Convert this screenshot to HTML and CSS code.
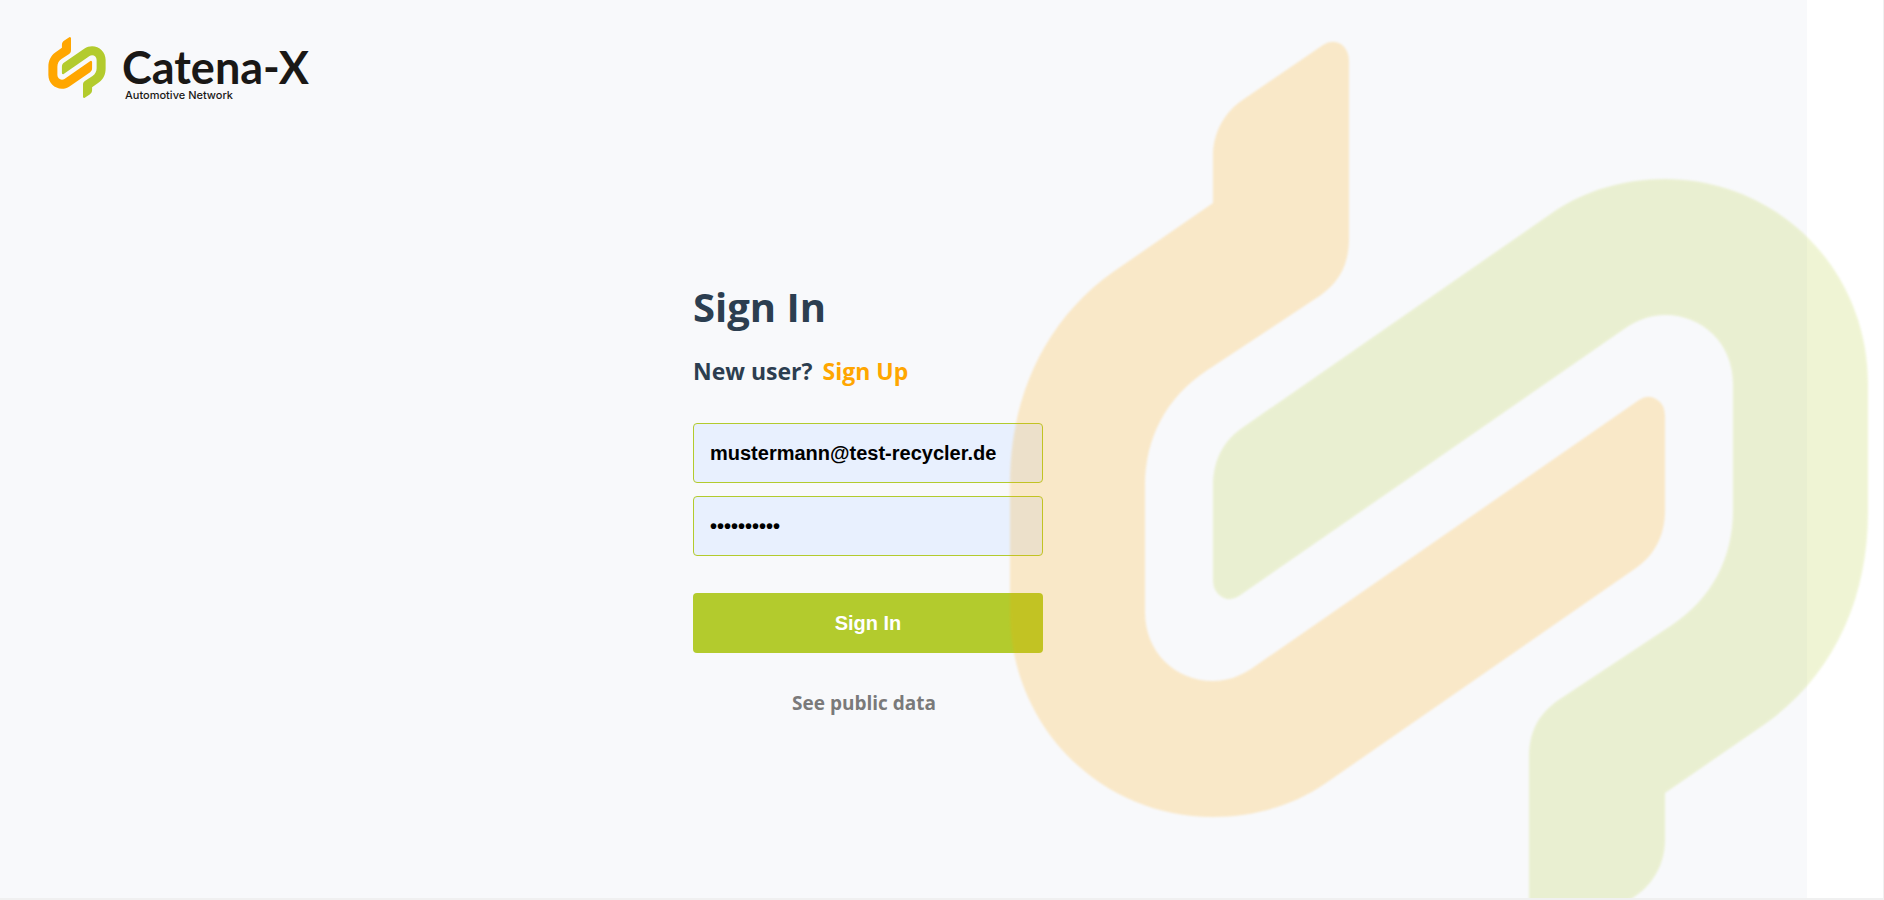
FILE: index.html
```html
<!DOCTYPE html>
<html lang="en">
<head>
<meta charset="utf-8">
<title>Catena-X - Sign In</title>
<link rel="stylesheet" href="styles.css">
</head>
<body>
<svg class="defs" aria-hidden="true">
  <defs>
    <path id="ribbon" d="M1323 45Q1332 39 1341 44Q1349 50 1349 61V238C1349 264 1340 281 1321 295L1206 371C1166 398 1145 438 1145 486V612C1145 652 1175 681 1213 681C1228 681 1240 676 1251 669L1639 400Q1648 394 1656 399Q1665 404 1665 416V510C1665 534 1656 554 1636 568L1326 783C1293 806 1253 817 1213 817C1101 817 1010 727 1010 612V484C1010 398 1044 321 1113 272L1213 203V156C1213 133 1224 112 1244 99Z"/>
  </defs>
  <symbol id="mark" viewBox="1010 41 858 914">
    <use href="#ribbon" fill="#ffa600"/>
    <use href="#ribbon" fill="#b3cb2d" transform="rotate(180 1439 498)"/>
  </symbol>
</svg>
<div class="page">
  <div class="panel">
    <header class="brand">
      <svg class="brand-mark" aria-hidden="true"><use href="#mark"/></svg>
      <div class="brand-text">
        <span class="brand-name">Catena-X</span>
        <span class="brand-sub">Automotive Network</span>
      </div>
    </header>
    <main class="content">
      <form class="form">
        <h1 class="title">Sign In</h1>
        <p class="signup">New user? <a class="signup-link" href="#signup">Sign Up</a></p>
        <input class="field" type="email" aria-label="Email" value="mustermann@test-recycler.de">
        <input class="field" type="password" aria-label="Password" value="recycler10">
        <button class="submit" type="button">Sign In</button>
        <a class="public" href="#public">See public data</a>
      </form>
    </main>
  </div>
  <svg class="watermark" aria-hidden="true"><use href="#mark"/></svg>
</div>
</body>
</html>
```
FILE: styles.css
```css
* { box-sizing: border-box; }
body {
  margin: 0;
  font-family: "Open Sans", "Liberation Sans", sans-serif;
  color: #2c3e50;
}
.defs { position: absolute; width: 0; height: 0; }
.page {
  position: relative;
  display: flex;
  min-height: 100vh;
  padding-right: 76px;
  background: #fff;
  border-right: 1px solid #f0f0f0;
  border-bottom: 2px solid #f0f0f0;
  overflow: hidden;
}
.panel { flex: 1; background: #f8f9fb; }
.brand {
  display: flex;
  gap: 16px;
  padding: 37px 48px 0;
}
.brand-mark { width: 58px; height: 61px; }
.brand-text {
  display: flex;
  flex-direction: column;
  padding-top: 8px;
  font-family: Lato, sans-serif;
  color: #1a1816;
}
.brand-name { font-size: 45px; line-height: 44px; font-weight: 700; }
.brand-sub {
  padding-left: 3px;
  font-family: Inter, sans-serif;
  font-size: 11px;
  line-height: 12px;
  font-weight: 500;
}
.content {
  display: flex;
  justify-content: center;
  padding: 178px 71px 0 0;
}
.form {
  display: flex;
  flex-direction: column;
  width: 350px;
}
.title { margin: 0; font-size: 40px; line-height: 56px; font-weight: 700; }
.signup { margin: 20px 0 36px; font-size: 23px; line-height: 32px; font-weight: 700; }
.signup-link { margin-left: 4px; color: #ffa600; text-decoration: none; }
.field {
  height: 60px;
  margin-bottom: 13px;
  padding: 0 16px;
  border: 1px solid #b3cb2d;
  border-radius: 4px;
  background: #e8f0fe;
  color: #000;
  font: 700 20px "Liberation Sans", sans-serif;
}
.submit {
  height: 60px;
  margin-top: 24px;
  border: 0;
  border-radius: 4px;
  background: #b3cb2d;
  color: #fff;
  font: 700 20px "Liberation Sans", sans-serif;
}
.public {
  align-self: center;
  margin: 36px 8px 0 0;
  font-size: 19px;
  line-height: 28px;
  font-weight: 700;
  color: #7a7a7a;
  text-decoration: none;
}
.watermark {
  position: absolute;
  top: 41px;
  right: 15px;
  width: 858px;
  height: 914px;
  opacity: 0.2;
  filter: blur(1px);
  pointer-events: none;
}
```
